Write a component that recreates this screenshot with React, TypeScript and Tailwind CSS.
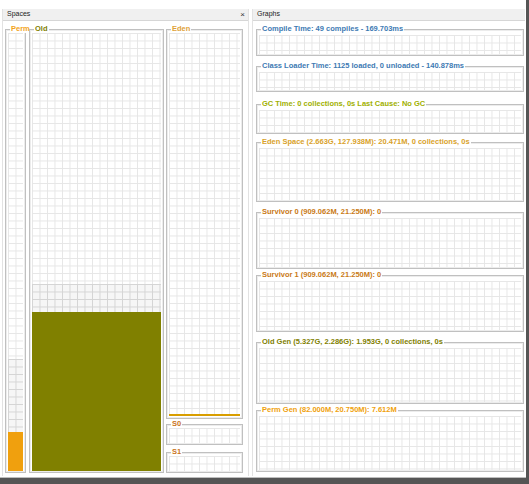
import type { ReactNode } from "react";

const grid =
	"bg-white bg-[linear-gradient(to_right,#e6e6e6_1px,transparent_1px),linear-gradient(to_bottom,#e6e6e6_1px,transparent_1px)] [background-size:7.5px_7.5px]";
const gridDark =
	"bg-[#f6f6f6] bg-[linear-gradient(to_right,#d4d4d4_1px,transparent_1px),linear-gradient(to_bottom,#d4d4d4_1px,transparent_1px)] [background-size:7.5px_7.5px]";

type BoxProps = {
	label: string;
	color: string;
	className?: string;
	bodyClass?: string;
	children?: ReactNode;
};

const Box = ({ label, color, className = "", bodyClass = "", children }: BoxProps) => (
	<fieldset
		className={`flex min-h-0 min-w-0 flex-col border border-[#c0c0c0] px-[2px] pb-[1px] shadow-[inset_0_0_0_1px_#ececec] ${className}`}
	>
		<legend
			className={`ml-[2px] whitespace-nowrap bg-white px-[1px] text-[7.5px] font-bold leading-[8px] ${color}`}
		>
			{label}
		</legend>
		<div className={`flex min-h-0 flex-1 flex-col ${bodyClass}`}>{children}</div>
	</fieldset>
);

// one chart in the Graphs panel
const Graph = ({ label, color, className }: { label: string; color: string; className: string }) => (
	<Box label={label} color={color} className={className} bodyClass="pt-[2px]">
		<div className={`flex-1 ${grid}`} />
	</Box>
);

const Header = ({ title, close }: { title: string; close?: boolean }) => (
	<div className="flex h-[12px] items-center justify-between border-b border-[#d6d6d6] bg-[#f0f0f0] pl-[4px] pr-[3px] text-[7px] text-[#222]">
		<span>{title}</span>
		{close && <span className="text-[8px] leading-none text-[#333]">×</span>}
	</div>
);

export default function App() {
	return (
		<div className="h-[484px] w-[529px] bg-[#555] font-['Liberation_Sans',Arial,sans-serif]">
			<div className="flex h-[478px] w-[526px] gap-[3px] border-b border-[#bdbdbd] bg-white pl-[2px] pt-[9px]">
				{/* Spaces */}
				<div className="flex h-[467px] w-[247px] flex-col border-x border-[#e2e2e2]">
					<Header title="Spaces" close />
					<div className="flex gap-[2px] pl-[2px] pt-[4px]">
						<Box label="Perm" color="text-[#f2a31a]" className="h-[448px] w-[21px] shrink-0" bodyClass="px-0">
							<div className={`flex-1 ${grid}`} />
							<div className={`h-[73px] ${gridDark}`} />
							<div className="h-[39px] bg-[#f0a00e]" />
						</Box>
						<Box label="Old" color="text-[#808000]" className="ml-[1px] h-[448px] w-[135px] shrink-0">
							<div className={`flex-1 ${grid}`} />
							<div className={`h-[28px] ${gridDark}`} />
							<div className="h-[159px] bg-[#808000]" />
						</Box>
						<div className="flex w-[77px] shrink-0 flex-col">
							<Box label="Eden" color="text-[#e0a238]" className="h-[394px]">
								<div className={`flex-1 ${grid}`} />
								<div className="mb-[1px] h-[2px] bg-[#d99e00]" />
							</Box>
							<Box label="S0" color="text-[#c9741a]" className="mt-[1px] h-[25px]">
								<div className={`flex-1 ${grid}`} />
							</Box>
							<Box label="S1" color="text-[#c9741a]" className="mt-[3px] h-[25px]">
								<div className={`flex-1 ${grid}`} />
							</Box>
						</div>
					</div>
				</div>

				{/* Graphs */}
				<div className="flex h-[467px] w-[273px] flex-col border-l border-[#e2e2e2]">
					<Header title="Graphs" />
					<div className="flex flex-col pl-[3px] pr-[1px] pt-[4px]">
						<Graph label="Compile Time: 49 compiles - 169.703ms" color="text-[#3d7ab3]" className="h-[31px]" />
						<Graph label="Class Loader Time: 1125 loaded, 0 unloaded - 140.878ms" color="text-[#3d7ab3]" className="mt-[6px] h-[30px]" />
						<Graph label="GC Time: 0 collections, 0s Last Cause: No GC" color="text-[#a0b000]" className="mt-[8px] h-[34px]" />
						<Graph label="Eden Space (2.663G, 127.938M): 20.471M, 0 collections, 0s" color="text-[#d9a22a]" className="mt-[4px] h-[64px]" />
						<Graph label="Survivor 0 (909.062M, 21.250M): 0" color="text-[#c97a16]" className="mt-[6px] h-[61px]" />
						<Graph label="Survivor 1 (909.062M, 21.250M): 0" color="text-[#c97a16]" className="mt-[2px] h-[61px]" />
						<Graph label="Old Gen (5.327G, 2.286G): 1.953G, 0 collections, 0s" color="text-[#808000]" className="mt-[6px] h-[66px]" />
						<Graph label="Perm Gen (82.000M, 20.750M): 7.612M" color="text-[#f0a10c]" className="mt-[2px] h-[66px]" />
					</div>
				</div>
			</div>
		</div>
	);
}
